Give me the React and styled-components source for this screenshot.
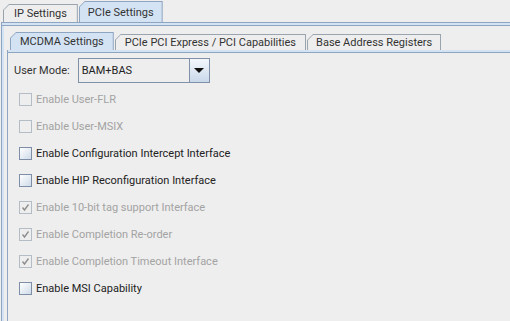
import React from 'react';
import styled, { createGlobalStyle } from 'styled-components';

const GlobalStyle = createGlobalStyle`
  html, body { margin: 0; padding: 0; background: #eeeeee; }
  body { font-family: Roboto, "Liberation Sans", sans-serif; }
`;

const Page = styled.div`
  width: 510px;
  height: 321px;
  overflow: hidden;
  background: #eeeeee;
  display: flex;
  flex-direction: column;
`;

const TabBar = styled.div`
  display: flex;
  align-items: flex-end;
  height: ${p => p.height}px;
  padding-left: ${p => p.indent}px;
  gap: 1px;
`;

const TabShape = styled.div`
  height: ${p => (p.selected ? p.h + 3 : p.h)}px;
  background: ${p => (p.selected ? '#8ea5c2' : '#9aa4ae')};
  clip-path: polygon(6px 0, 100% 0, 100% 100%, 0 100%, 0 6px);
  padding: 1px 1px 0 1px;
  box-sizing: border-box;
`;

const TabFace = styled.div`
  height: 100%;
  box-sizing: border-box;
  background: ${p => (p.selected ? '#d4e3f3' : '#eeeeee')};
  clip-path: polygon(5px 0, 100% 0, 100% 100%, 0 100%, 0 5px);
  padding: 0 ${p => p.pad}px;
  display: flex;
  align-items: center;
  font-size: 11px;
  color: #333333;
  white-space: nowrap;
`;

const Tab = ({ selected, h, pad, children }) => (
  <TabShape selected={selected} h={h}>
    <TabFace selected={selected} pad={pad}>{children}</TabFace>
  </TabShape>
);

const Frame = styled.div`
  flex: 1;
  display: flex;
  flex-direction: column;
  border-top: 1px solid #8ea5c2;
  border-left: 1px solid #8ea5c2;
  margin-left: ${p => p.indent}px;
`;

const Band = styled.div`
  height: 2px;
  background: #d4e3f3;
  border-bottom: 1px solid #8ea5c2;
  flex-shrink: 0;
`;

const Body = styled.div`
  flex: 1;
  display: flex;
  flex-direction: column;
  border-left: 2px solid #d4e3f3;
  padding-left: ${p => p.pad}px;
`;

const InnerLine = styled.div`
  flex: 1;
  display: flex;
  flex-direction: column;
  border-left: 1px solid #8ea5c2;
`;

const Content = styled.div`
  display: flex;
  flex-direction: column;
  padding: 5px 0 0 6px;
`;

const ModeRow = styled.div`
  display: flex;
  align-items: center;
  gap: 8px;
  font-size: 11px;
  color: #333333;
  height: 25px;
`;

const Combo = styled.div`
  width: 132px;
  height: 25px;
  box-sizing: border-box;
  border: 1px solid #7f90a8;
  display: flex;
  background: #eeeeee;
`;

const ComboText = styled.div`
  flex: 1;
  display: flex;
  align-items: center;
  padding-left: 3px;
  font-size: 11px;
  color: #222222;
`;

const ComboButton = styled.div`
  width: 19px;
  border-left: 1px solid #7f90a8;
  background: linear-gradient(#f4f8fc, #c9d8ea);
  display: flex;
  align-items: center;
  justify-content: center;
`;

const Arrow = styled.div`
  width: 0;
  height: 0;
  border-left: 5px solid transparent;
  border-right: 5px solid transparent;
  border-top: 5px solid #111111;
`;

const Options = styled.div`
  display: flex;
  flex-direction: column;
  padding-left: 5px;
  margin-top: 3px;
`;

const Row = styled.div`
  height: 27px;
  display: flex;
  align-items: center;
  gap: 4px;
  font-size: 11px;
  color: ${p => (p.disabled ? '#a3a3a3' : '#222222')};
`;

const Box = styled.div`
  width: 13px;
  height: 13px;
  box-sizing: border-box;
  border: 1px solid ${p => (p.disabled ? '#b4bcc6' : '#7d8ea6')};
  background: ${p =>
    p.disabled ? '#eeeeee' : 'linear-gradient(135deg, #ffffff, #cfdbe9)'};
  display: flex;
  align-items: center;
  justify-content: center;
`;

const Check = () => (
  <svg width="9" height="9" viewBox="0 0 9 9">
    <path d="M1.5 4.5 L3.5 7 L7.5 1.5" fill="none" stroke="#8f8f8f" strokeWidth="1.4" />
  </svg>
);

const options = [
  { label: 'Enable User-FLR', disabled: true },
  { label: 'Enable User-MSIX', disabled: true },
  { label: 'Enable Configuration Intercept Interface' },
  { label: 'Enable HIP Reconfiguration Interface' },
  { label: 'Enable 10-bit tag support Interface', disabled: true, checked: true },
  { label: 'Enable Completion Re-order', disabled: true, checked: true },
  { label: 'Enable Completion Timeout Interface', disabled: true, checked: true },
  { label: 'Enable MSI Capability' },
];

export default function App() {
  return (
    <Page>
      <GlobalStyle />
      <TabBar height={22} indent={3}>
        <Tab h={18} pad={10}>IP Settings</Tab>
        <Tab selected h={18} pad={8}>PCIe Settings</Tab>
      </TabBar>
      <Frame indent={1}>
        <Band />
        <Body pad={3}>
          <TabBar height={24} indent={3}>
            <Tab selected h={15} pad={9}>MCDMA Settings</Tab>
            <Tab h={16} pad={9}>PCIe PCI Express / PCI Capabilities</Tab>
            <Tab h={16} pad={8}>Base Address Registers</Tab>
          </TabBar>
          <InnerLine>
            <Band />
            <Content>
              <ModeRow>
                User Mode:
                <Combo>
                  <ComboText>BAM+BAS</ComboText>
                  <ComboButton><Arrow /></ComboButton>
                </Combo>
              </ModeRow>
              <Options>
                {options.map(o => (
                  <Row key={o.label} disabled={o.disabled}>
                    <Box disabled={o.disabled}>{o.checked && <Check />}</Box>
                    {o.label}
                  </Row>
                ))}
              </Options>
            </Content>
          </InnerLine>
        </Body>
      </Frame>
    </Page>
  );
}
